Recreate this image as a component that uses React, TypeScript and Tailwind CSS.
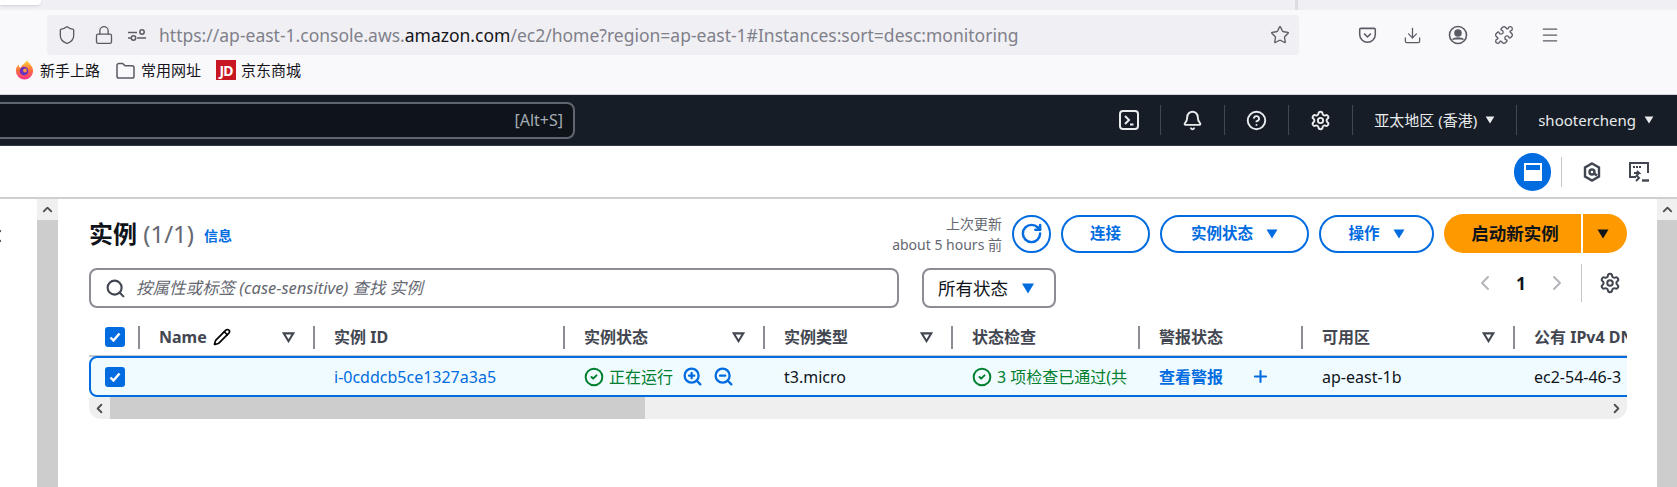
import { Bell, ChevronLeft, ChevronRight, ChevronUp, CircleCheck, CircleHelp, Download, Lock, Menu, Pencil, Plus, Puzzle, RotateCw, Search, Settings, Shield, Star, X, ZoomIn, ZoomOut } from 'lucide-react';

const FONT = '"Noto Sans", "Noto Sans CJK SC", sans-serif';

function Caret({ className }: { className: string }) {
  return (
    <svg viewBox="0 0 12 10" className={className} fill="currentColor">
      <path d="M0.5 0.5h11L6 9.5z" />
    </svg>
  );
}

function SortCaret() {
  return (
    <svg viewBox="0 0 14 12" className="w-[13px] h-[11px] text-[#424650]" fill="none" stroke="currentColor" strokeWidth="2.2">
      <path d="M1.8 1.5h10.4L7 10z" />
    </svg>
  );
}

function Checkbox() {
  return (
    <div className="w-[20px] h-[20px] rounded-[3px] bg-[#006ce0] flex items-center justify-center">
      <svg viewBox="0 0 14 14" className="w-[14px] h-[14px]" fill="none" stroke="white" strokeWidth="2.4">
        <path d="M2.5 7.5l3 3 6-7" />
      </svg>
    </div>
  );
}

function NavDivider() {
  return <div className="w-px h-[30px] bg-[#414750]" />;
}

function HeadCol({ width, label, sort, children }: { width: string; label: string; sort?: boolean; children?: React.ReactNode }) {
  return (
    <div className={`${width} shrink-0 h-[24px] flex items-center border-l-2 border-[#8c8c94] pl-[19px] pr-[18px]`}>
      <span className="font-bold text-[#424650] whitespace-nowrap">{label}</span>
      {children}
      {sort && <span className="ml-auto flex"><SortCaret /></span>}
    </div>
  );
}

export default function App() {
  return (
    <div className="w-[1677px] h-[487px] overflow-hidden bg-white flex flex-col" style={{ fontFamily: FONT }}>
      {/* tab strip */}
      <div className="h-[10px] bg-[#f0f0f4] flex shrink-0">
        <div className="w-[41px] h-[5px] bg-white rounded-br-[4px] shadow-sm" />
        <div className="w-[3px] h-full bg-[#dddde1] ml-[1254px]" />
      </div>

      {/* browser toolbar */}
      <div className="h-[85px] bg-[#f9f9fb] shrink-0 flex flex-col border-b border-[#d4d4d8]">
        <div className="flex items-center pt-[5px] h-[45px] text-[#5b5b66]">
          <div className="ml-[47px] w-[1252px] h-[40px] rounded-[4px] bg-[#f0f0f4] flex items-center pl-[10px] pr-[9px]">
            <Shield size={20} strokeWidth={1.6} />
            <Lock size={20} strokeWidth={1.6} className="ml-[17px]" />
            <svg viewBox="0 0 18 12" className="w-[18px] h-[12px] ml-[14px]" fill="none" stroke="currentColor" strokeWidth="1.5">
              <path d="M0 3.5h9M0 9h3M9 9h9" />
              <circle cx="14" cy="3" r="2.2" />
              <circle cx="5.5" cy="9" r="2.2" />
            </svg>
            <span className="ml-[13px] text-[17.5px] text-[#80808a] whitespace-nowrap">
              https://ap-east-1.console.aws.<span className="text-[#15141a]">amazon.com</span>/ec2/home?region=ap-east-1#Instances:sort=desc:monitoring
            </span>
            <Star size={20} strokeWidth={1.6} className="ml-auto" />
          </div>
          <svg viewBox="0 0 20 20" className="w-[19px] h-[19px] ml-[59px]" fill="none" stroke="currentColor" strokeWidth="1.6">
            <path d="M3 2.5h14a1.2 1.2 0 0 1 1.2 1.2V9a8.2 8.2 0 0 1-16.4 0V3.7A1.2 1.2 0 0 1 3 2.5z" />
            <path d="M6.5 8l3.5 3.5L13.5 8" />
          </svg>
          <Download size={19} strokeWidth={1.6} className="ml-[26px]" />
          <svg viewBox="0 0 20 20" className="w-[20px] h-[20px] ml-[26px]" fill="none" stroke="currentColor" strokeWidth="1.6">
            <circle cx="10" cy="10" r="8.5" />
            <circle cx="10" cy="8" r="3" fill="currentColor" />
            <path d="M4.5 14.5c2-2 9-2 11 0" fill="currentColor" />
          </svg>
          <Puzzle size={20} strokeWidth={1.6} className="ml-[26px]" />
          <Menu size={20} strokeWidth={1.5} className="ml-[26px]" />
        </div>
        <div className="flex items-center h-[30px] pl-[15px] text-[15px] text-[#15141a]">
          <svg viewBox="0 0 20 20" className="w-[19px] h-[20px] shrink-0">
            <defs>
              <linearGradient id="fx" x1="0" y1="0" x2="0" y2="1">
                <stop offset="0" stopColor="#ffd53d" />
                <stop offset="0.5" stopColor="#ff7139" />
                <stop offset="1" stopColor="#f5338b" />
              </linearGradient>
            </defs>
            <path d="M13 0c1 3 6 5 6 11a9 9 0 0 1-18 0c0-3 1-5 3-6.500c0 2 1 3 2 3 1-3 4-4 7-7.500z" fill="url(#fx)" />
            <circle cx="9.500" cy="11" r="4.500" fill="#6b2fbf" />
            <circle cx="10.500" cy="10.500" r="2" fill="#ff9640" />
          </svg>
          <span className="ml-[6px] w-[60px] whitespace-nowrap">新手上路</span>
          <svg viewBox="0 0 20 18" className="w-[19px] h-[17px] ml-[16px]" fill="none" stroke="#5b5b66" strokeWidth="1.6">
            <path d="M1 3.500a2 2 0 0 1 2-2h4l2.500 2.500H17a2 2 0 0 1 2 2v9a2 2 0 0 1-2 2H3a2 2 0 0 1-2-2z" />
          </svg>
          <span className="ml-[6px] w-[60px] whitespace-nowrap">常用网址</span>
          <div className="ml-[15px] w-[20px] h-[20px] bg-[#c91623] text-white text-[14px] font-bold flex items-center justify-center tracking-[-1px]">JD</div>
          <span className="ml-[5px] whitespace-nowrap">京东商城</span>
        </div>
      </div>

      {/* console nav */}
      <div className="h-[51px] bg-[#161d26] shrink-0 flex items-center text-[#e9ebed] pr-[23px] border-b border-[#333a45]">
        <div className="-ml-[10px] w-[585px] h-[37px] rounded-[8px] bg-[#0f141a] border-2 border-[#5f6670] flex items-center justify-end pr-[10px] text-[16px] text-[#a4abb5]">
          [Alt+S]
        </div>
        <div className="ml-auto flex items-center gap-[21px] text-[15px]">
          <svg viewBox="0 0 20 20" className="w-[20px] h-[20px]" fill="none" stroke="currentColor" strokeWidth="2">
            <rect x="1" y="1" width="18" height="18" rx="3" />
            <path d="M6 6l4 4-4 4M11 14.500h3.500" />
          </svg>
          <NavDivider />
          <Bell size={21} strokeWidth={2.2} />
          <NavDivider />
          <CircleHelp size={21} strokeWidth={2.2} />
          <NavDivider />
          <Settings size={21} strokeWidth={2.2} />
          <NavDivider />
          <div className="flex items-center gap-[8px] whitespace-nowrap">
            亚太地区 (香港)
            <Caret className="w-[10px] h-[8px]" />
          </div>
          <NavDivider />
          <div className="flex items-center gap-[8px] whitespace-nowrap">
            shootercheng
            <Caret className="w-[10px] h-[8px]" />
          </div>
        </div>
      </div>

      {/* tools bar */}
      <div className="h-[53px] shrink-0 border-b-2 border-[#cfcfd2] flex items-center pr-[28px] text-[#424650]">
        <div className="ml-auto w-[37px] h-[38px] rounded-full bg-[#006ce0] flex items-center justify-center">
          <div className="w-[18px] h-[18px] border-2 border-white flex flex-col justify-end">
            <div className="h-[9px] bg-white" />
          </div>
        </div>
        <div className="w-px h-[30px] bg-[#c6c6cd] ml-[10px]" />
        <svg viewBox="0 0 18 20" className="w-[18px] h-[20px] ml-[21px]" fill="none" stroke="currentColor" strokeWidth="2.4">
          <path d="M9 1.500l7 4v9l-7 4-7-4v-9z" />
          <circle cx="9" cy="10" r="2.500" />
          <path d="M11 11.500l3 2" />
        </svg>
        <svg viewBox="0 0 20 20" className="w-[20px] h-[20px] ml-[28px]" fill="none" stroke="currentColor" strokeWidth="2">
          <path d="M7 15H1V1h18v10" />
          <path d="M4 5h9" strokeDasharray="2 1" strokeWidth="2" />
          <path d="M5 11h5l-2-2M10 11l-2 2 M7 13l3 3-3 3" />
          <path d="M13 18.500h7" strokeWidth="2.400" />
        </svg>
      </div>

      {/* page body */}
      <div className="flex-1 flex min-h-0">
        <div className="w-[37px] shrink-0 overflow-hidden text-[#424650]">
          <X size={20} strokeWidth={2.6} className="-ml-[15px] mt-[27px]" />
        </div>
        <div className="w-[21px] shrink-0 bg-[#cdcdcd]">
          <div className="h-[21px] bg-[#f0f0f0] flex items-center justify-center text-[#505050]">
            <ChevronUp size={15} strokeWidth={3} />
          </div>
        </div>

        <div className="w-[1599px] shrink-0 pl-[31px] pr-[30px] pt-[15px]">
          {/* title row */}
          <div className="flex items-center h-[39px]">
            <h1 className="text-[24px] font-bold text-[#0f141a] whitespace-nowrap">
              实例 <span className="font-normal text-[#656871]">(1/1)</span>
            </h1>
            <span className="ml-[10px] mt-[4px] text-[14px] font-bold text-[#006ce0]">信息</span>
            <div className="ml-auto text-right text-[14px] leading-[21px] text-[#656871] whitespace-nowrap">
              <div>上次更新</div>
              <div>about 5 hours 前</div>
            </div>
            <div className="ml-[10px] w-[39px] h-[38px] rounded-full border-2 border-[#006ce0] text-[#006ce0] flex items-center justify-center">
              <RotateCw size={23} strokeWidth={2.6} />
            </div>
            <div className="ml-[10px] w-[89px] h-[38px] rounded-full border-2 border-[#006ce0] text-[#006ce0] text-[15.500px] font-bold flex items-center justify-center">
              连接
            </div>
            <div className="ml-[10px] w-[149px] h-[38px] rounded-full border-2 border-[#006ce0] text-[#006ce0] text-[15.500px] font-bold flex items-center justify-center gap-[13px]">
              实例状态
              <Caret className="w-[12px] h-[10px]" />
            </div>
            <div className="ml-[10px] w-[115px] h-[38px] rounded-full border-2 border-[#006ce0] text-[#006ce0] text-[15.500px] font-bold flex items-center justify-center gap-[13px]">
              操作
              <Caret className="w-[12px] h-[10px]" />
            </div>
            <div className="ml-[10px] w-[137px] h-[39px] rounded-l-full bg-[#ff9900] text-[#0f141a] text-[17.500px] font-bold flex items-center justify-center pl-[5px]">
              启动新实例
            </div>
            <div className="ml-[2px] w-[44px] h-[39px] rounded-r-full bg-[#ff9900] text-[#0f141a] flex items-center justify-center pr-[4px]">
              <Caret className="w-[12px] h-[10px]" />
            </div>
          </div>

          {/* filter row */}
          <div className="flex items-start mt-[15px] h-[40px]">
            <div className="w-[810px] h-[40px] rounded-[8px] border-2 border-[#8c8c94] flex items-center pl-[14px] text-[#424650]">
              <Search size={21} strokeWidth={2.4} />
              <span className="ml-[10px] text-[16.500px] italic text-[#656871] whitespace-nowrap">按属性或标签 (case-sensitive) 查找 实例</span>
            </div>
            <div className="ml-[23px] w-[134px] h-[40px] rounded-[8px] border-2 border-[#8c8c94] flex items-center pl-[14px] text-[17.500px] text-[#0f141a]">
              所有状态
              <Caret className="w-[14px] h-[11px] ml-[13px] text-[#006ce0]" />
            </div>
            <div className="ml-auto -mt-[4px] h-[38px] flex items-center text-[#b4b4bb]">
              <ChevronLeft size={24} strokeWidth={2} />
              <span className="ml-[19px] text-[17.500px] font-bold text-[#0f141a]">1</span>
              <ChevronRight size={24} strokeWidth={2} className="ml-[19px]" />
              <div className="w-px h-[38px] bg-[#c6c6cd] ml-[12px]" />
              <Settings size={22} strokeWidth={2.2} className="ml-[17px] mr-[6px] text-[#424650]" />
            </div>
          </div>

          {/* table */}
          <div className="mt-[18px] w-[1538px] overflow-hidden text-[16px]">
            <div className="flex items-center h-[31px] pb-[7px] border-b-2 border-[#c6c6cd] overflow-hidden">
              <div className="w-[49px] shrink-0 pl-[16px]">
                <Checkbox />
              </div>
              <HeadCol width="w-[175px]" label="Name" sort>
                <Pencil size={18} strokeWidth={2.2} className="ml-[6px]" />
              </HeadCol>
              <HeadCol width="w-[250px]" label="实例 ID" />
              <HeadCol width="w-[200px]" label="实例状态" sort />
              <HeadCol width="w-[188px]" label="实例类型" sort />
              <HeadCol width="w-[187px]" label="状态检查" />
              <HeadCol width="w-[163px]" label="警报状态" />
              <HeadCol width="w-[212px]" label="可用区" sort />
              <HeadCol width="w-[200px]" label="公有 IPv4 DNS" />
            </div>

            {/* selected row */}
            <div className="w-[1620px] h-[41px] -mt-px flex items-center bg-[#f0fbff] border-2 border-[#006ce0] rounded-l-[8px] whitespace-nowrap text-[#0f141a]">
              <div className="w-[47px] shrink-0 pl-[14px]">
                <Checkbox />
              </div>
              <div className="w-[196px] shrink-0" />
              <div className="w-[250px] shrink-0 text-[#006ce0]">i-0cddcb5ce1327a3a5</div>
              <div className="w-[200px] shrink-0 flex items-center text-[#00802f]">
                <CircleCheck size={20} strokeWidth={2.4} />
                <span className="ml-[5px]">正在运行</span>
                <ZoomIn size={21} strokeWidth={2.6} className="ml-[9px] text-[#006ce0]" />
                <ZoomOut size={21} strokeWidth={2.6} className="ml-[10px] text-[#006ce0]" />
              </div>
              <div className="w-[188px] shrink-0">t3.micro</div>
              <div className="w-[187px] shrink-0 flex items-center text-[#00802f] overflow-hidden">
                <CircleCheck size={20} strokeWidth={2.4} className="shrink-0" />
                <span className="ml-[5px]">3 项检查已通过(共</span>
              </div>
              <div className="w-[163px] shrink-0 flex items-center text-[#006ce0]">
                <span className="font-bold">查看警报</span>
                <Plus size={19} strokeWidth={2.6} className="ml-[28px]" />
              </div>
              <div className="w-[212px] shrink-0">ap-east-1b</div>
              <div>ec2-54-46-3</div>
            </div>

            {/* horizontal scrollbar */}
            <div className="h-[22px] flex bg-[#efefef] rounded-b-[12px] overflow-hidden text-[#505050]">
              <div className="w-[21px] flex items-center justify-center">
                <ChevronLeft size={15} strokeWidth={3} />
              </div>
              <div className="w-[535px] bg-[#cdcdcd]" />
              <div className="ml-auto w-[21px] flex items-center justify-center">
                <ChevronRight size={15} strokeWidth={3} />
              </div>
            </div>
          </div>
        </div>

        <div className="w-[20px] shrink-0 bg-[#cdcdcd]">
          <div className="h-[21px] bg-[#f0f0f0] flex items-center justify-center text-[#505050]">
            <ChevronUp size={15} strokeWidth={3} />
          </div>
        </div>
      </div>
    </div>
  );
}
